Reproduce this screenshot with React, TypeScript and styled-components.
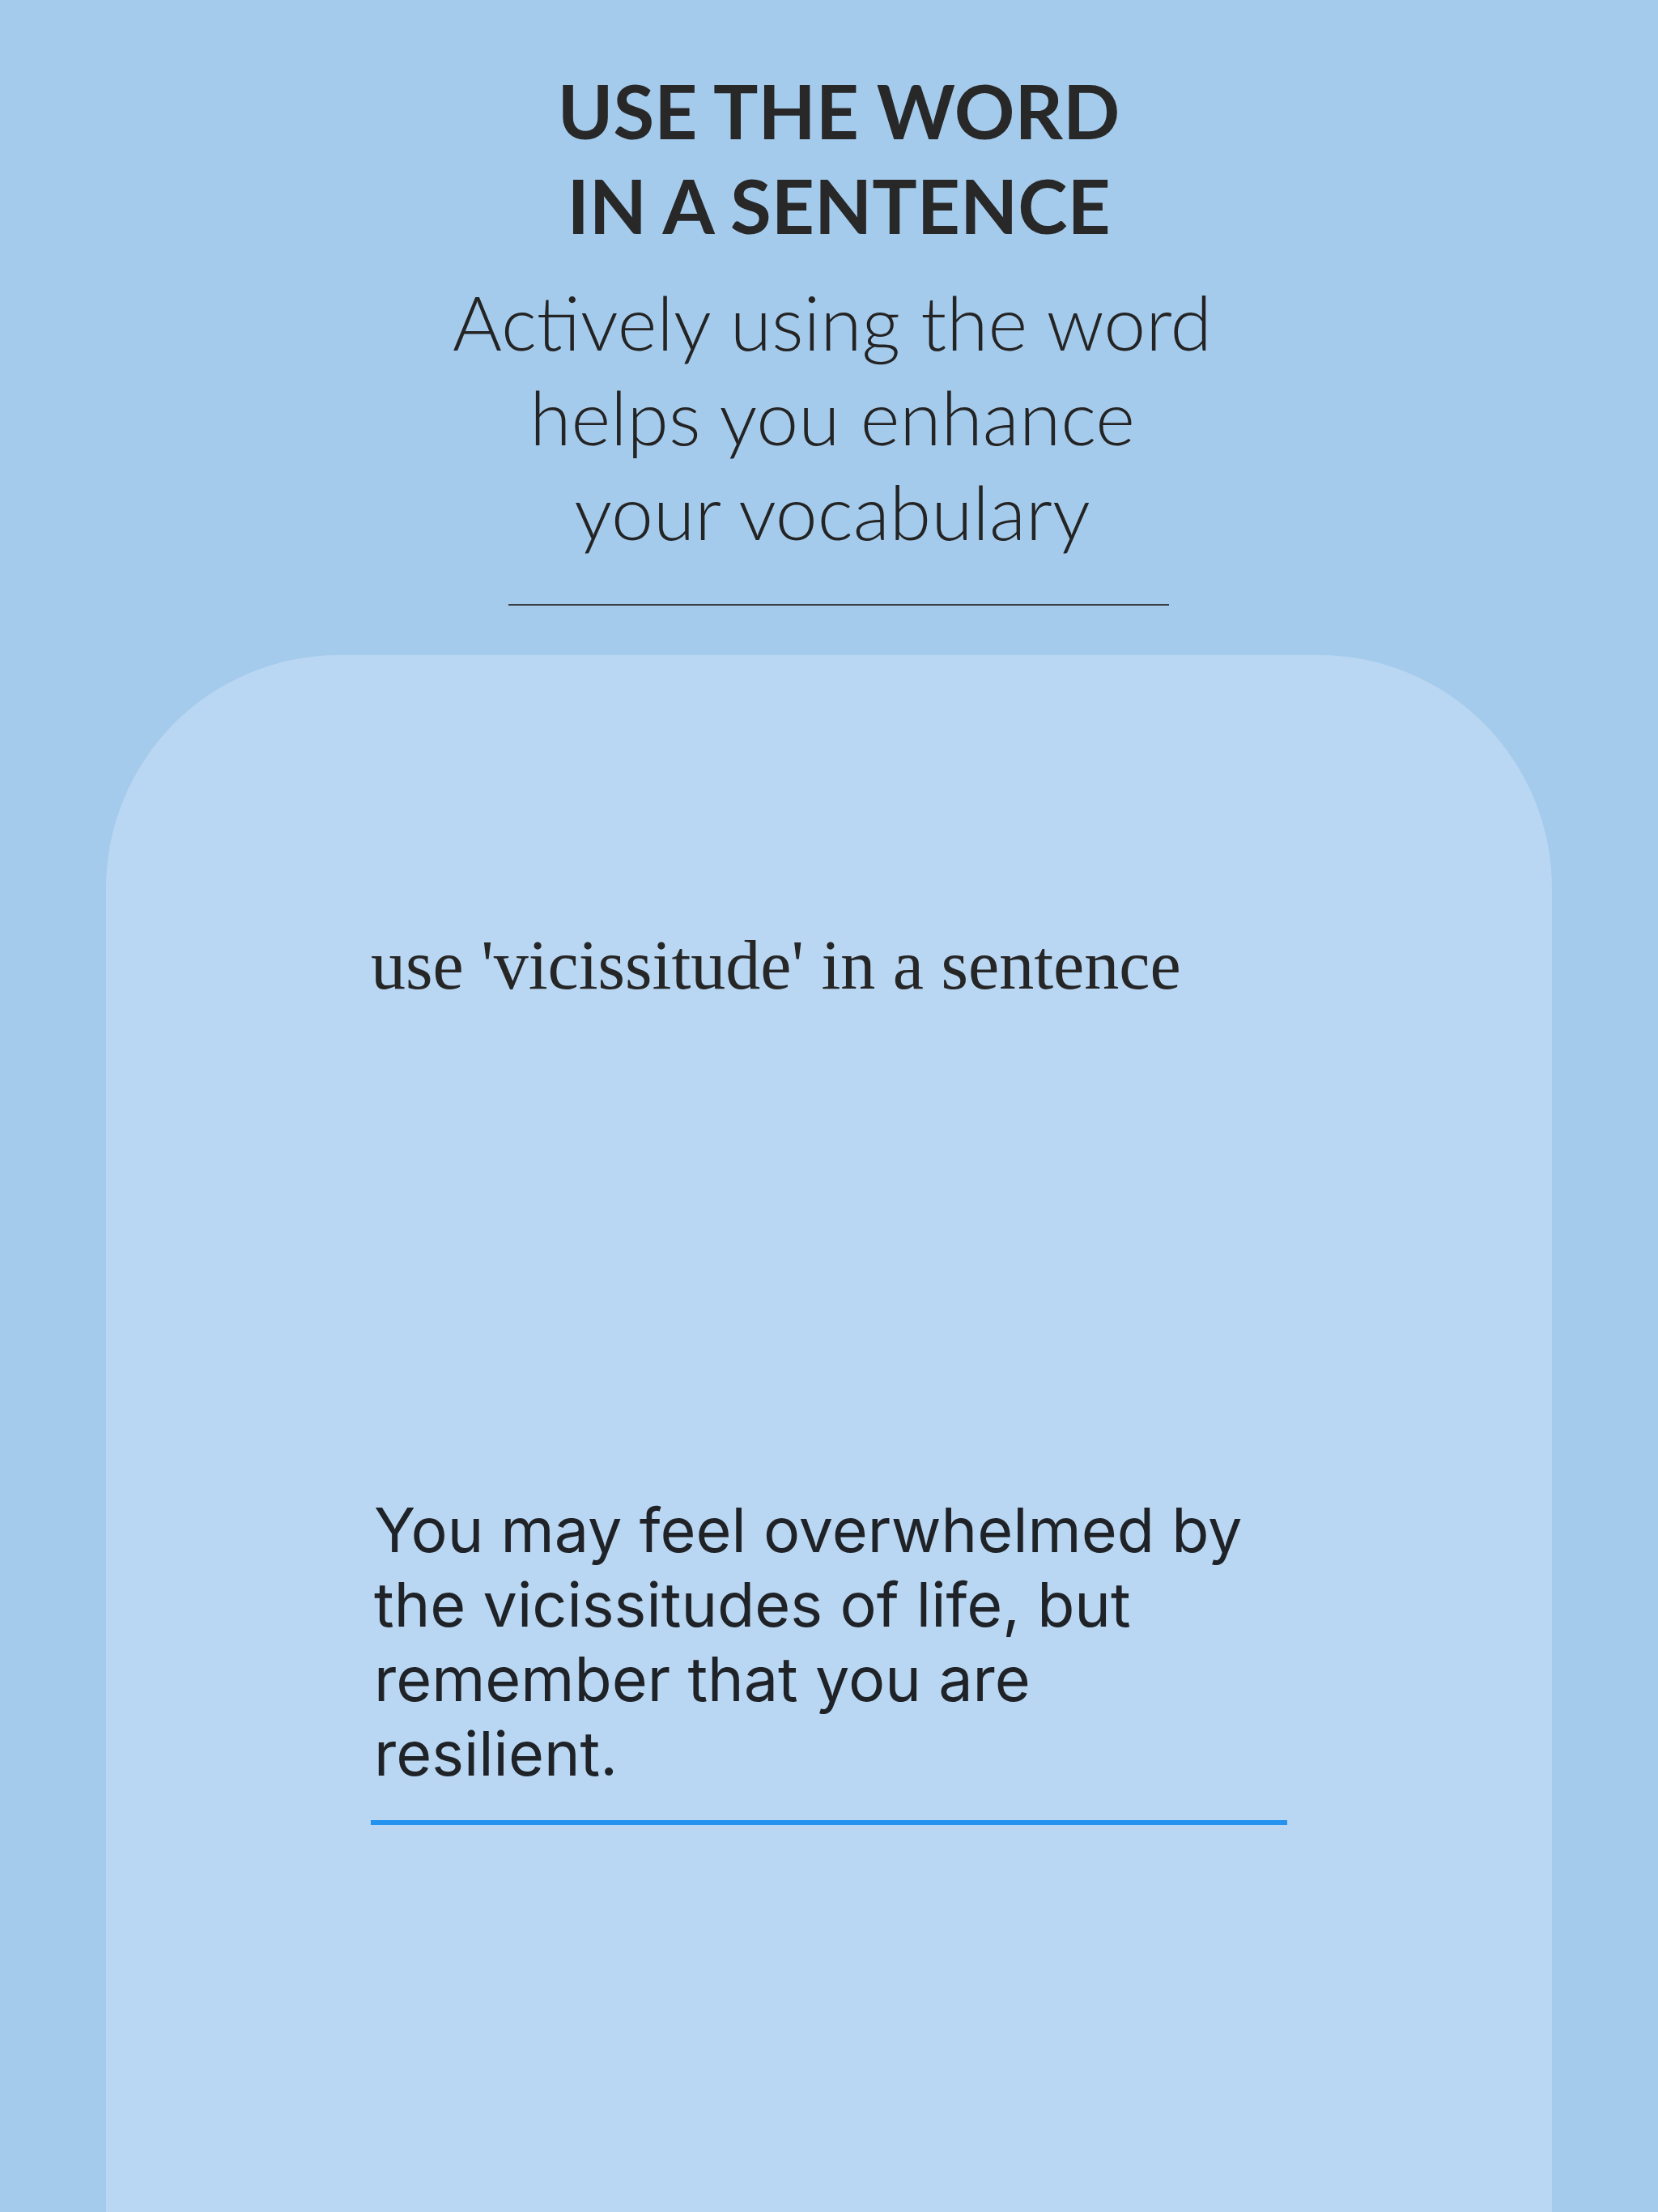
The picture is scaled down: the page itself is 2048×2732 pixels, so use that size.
import React from "react";
import styled, { createGlobalStyle } from "styled-components";

const GlobalStyle = createGlobalStyle`
  html, body {
    margin: 0;
    padding: 0;
    background: #a5cbec;
  }

  #root {
    min-height: 100vh;
  }
`;

const Page = styled.div`
  display: flex;
  flex-direction: column;
  align-items: center;
  min-height: 100vh;
  height: 2732px;
  overflow: hidden;
  background: #a5cbec;
  color: #262626;
`;

const Header = styled.header`
  display: flex;
  flex-direction: column;
  align-items: center;
  padding-top: 78px;
  text-align: center;
`;

const Title = styled.h1`
  margin: 0;
  padding-left: 24px;
  font-family: Lato, "Open Sans", sans-serif;
  font-weight: 700;
  font-size: 92.5px;
  line-height: 117px;
  color: #282828;
`;

const Subtitle = styled.p`
  margin: 27px 0 0;
  padding-left: 8px;
  font-family: Lato, "Open Sans", sans-serif;
  font-weight: 300;
  font-size: 93.2px;
  line-height: 117px;
  color: #242424;
`;

const Divider = styled.hr`
  width: 816px;
  height: 0;
  margin: 56px 0 0 24px;
  border: none;
  border-top: 2px solid #3a3d42;
`;

const Card = styled.section`
  flex: 1;
  align-self: stretch;
  margin: 61px 131px 0;
  padding: 332px 327px 0;
  background: #b9d7f2;
  border-radius: 288px 288px 0 0;
`;

const Prompt = styled.p`
  margin: 0;
  font-family: "Liberation Serif", "DejaVu Serif", serif;
  font-size: 86px;
  line-height: 1.2;
  color: #262626;
`;

const Answer = styled.div`
  margin-top: 600px;
  padding: 0 0 36px 4px;
  border-bottom: 6px solid #2393ef;
  font-family: Inter, "Liberation Sans", sans-serif;
  font-size: 75.5px;
  line-height: 92px;
  color: #1f2227;
`;

function App() {
  return (
    <Page>
      <GlobalStyle />
      <Header>
        <Title>
          USE THE WORD
          <br />
          IN A SENTENCE
        </Title>
        <Subtitle>
          Actively using the word
          <br />
          helps you enhance
          <br />
          your vocabulary
        </Subtitle>
        <Divider />
      </Header>
      <Card>
        <Prompt>use 'vicissitude' in a sentence</Prompt>
        <Answer>
          You may feel overwhelmed by
          <br />
          the vicissitudes of life, but
          <br />
          remember that you are
          <br />
          resilient.
        </Answer>
      </Card>
    </Page>
  );
}

export default App;
